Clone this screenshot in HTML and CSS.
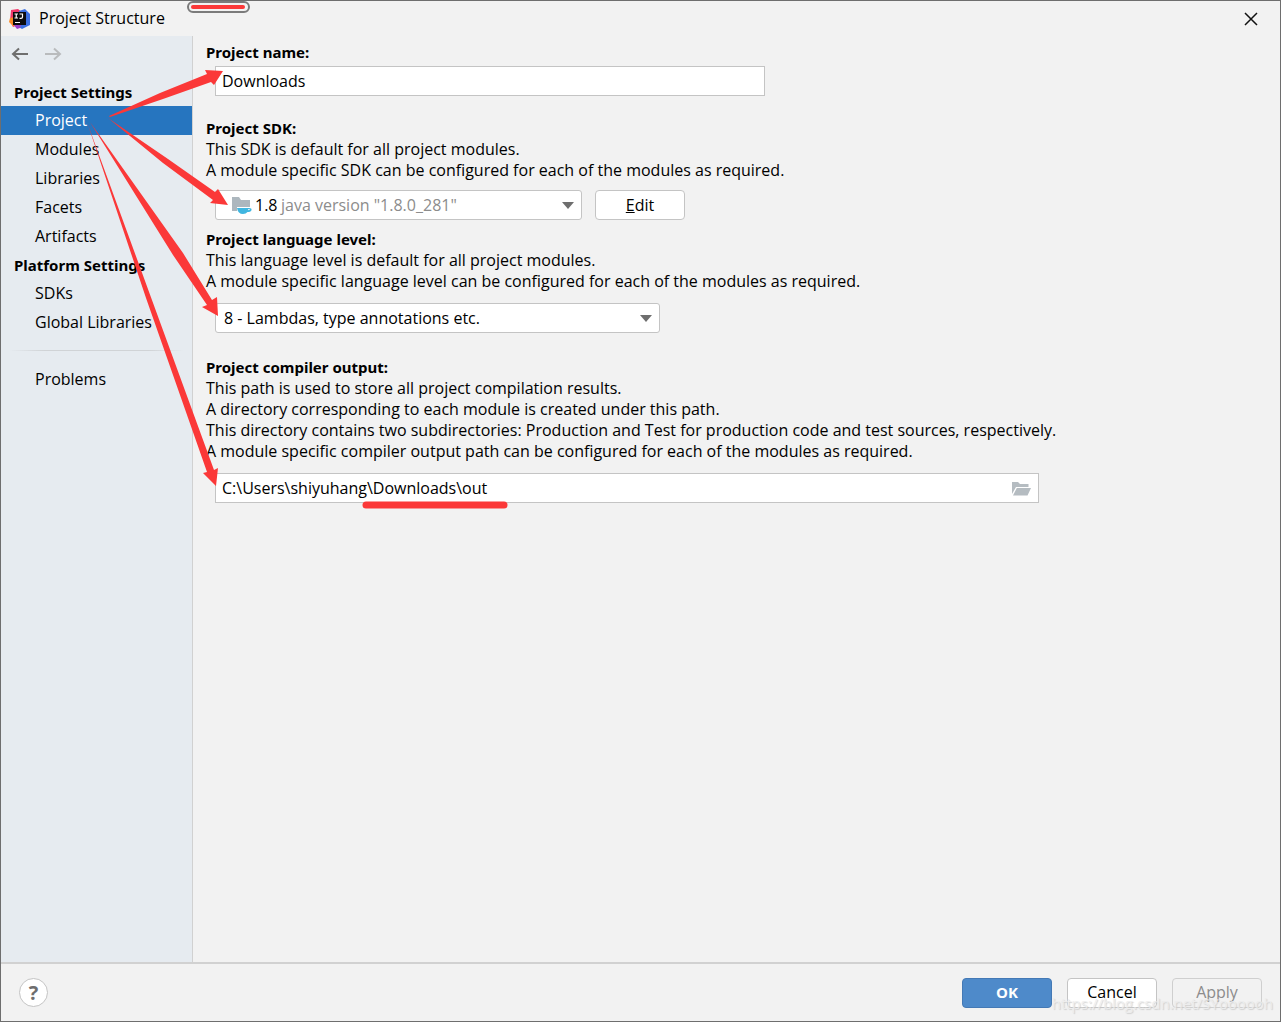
FILE: index.html
```html
<!DOCTYPE html>
<html lang="en">
<head>
<meta charset="utf-8">
<meta name="viewport" content="width=device-width, initial-scale=1">
<title>Project Structure</title>
<link rel="stylesheet" href="styles.css">
</head>
<body>
<div class="window">
  <header class="titlebar">
    <svg class="logo" width="22" height="22" viewBox="0 0 22 22" aria-hidden="true">
      <path d="M2 2 L9 1 L13 4 L9 17 L4 19 L1 13 Z" fill="#f0386b"/>
      <path d="M1 10 L6 9 L7 18 L4 18 L0 14 Z" fill="#fb8a24"/>
      <path d="M10 3 L16 1 L21 6 L21 17 L13 21 L8 18 Z" fill="#3b6fe0"/>
      <path d="M4 16 L12 17 L11 20 L8 21 Z" fill="#9b3fc9"/>
      <rect x="4" y="4" width="13" height="13" fill="#0b0b0d"/>
      <path d="M5.500 6h3.500M7.250 6v4M5.500 10h3.500M10.500 6h3v3q0 1.300-1.500 1.300h-1.500M6 14.500h5" fill="none" stroke="#fff" stroke-width="1.200"/>
    </svg>
    <h1 class="title">Project Structure</h1>
    <button class="close" type="button" aria-label="Close">
      <svg width="14" height="14" viewBox="0 0 14 14"><path d="M1 1L13 13M13 1L1 13" stroke="#111" stroke-width="1.500"/></svg>
    </button>
  </header>

  <div class="content">
    <aside class="sidebar">
      <div class="history">
        <button class="nav-button" type="button" aria-label="Back">
          <svg width="18" height="14" viewBox="0 0 18 14"><path d="M17 7H2M8 1.500L2 7L8 12.500" fill="none" stroke="#6e6e6e" stroke-width="2"/></svg>
        </button>
        <button class="nav-button" type="button" aria-label="Forward" disabled>
          <svg width="18" height="14" viewBox="0 0 18 14"><path d="M1 7H16M10 1.500L16 7L10 12.500" fill="none" stroke="#b9bbbd" stroke-width="2"/></svg>
        </button>
      </div>
      <nav class="nav">
        <h2 class="nav-heading">Project Settings</h2>
        <a class="nav-item selected" href="#project" aria-current="page">Project</a>
        <a class="nav-item" href="#modules">Modules</a>
        <a class="nav-item" href="#libraries">Libraries</a>
        <a class="nav-item" href="#facets">Facets</a>
        <a class="nav-item" href="#artifacts">Artifacts</a>
        <h2 class="nav-heading">Platform Settings</h2>
        <a class="nav-item" href="#sdks">SDKs</a>
        <a class="nav-item" href="#global-libraries">Global Libraries</a>
        <div class="separator"></div>
        <a class="nav-item" href="#problems">Problems</a>
      </nav>
    </aside>

    <main class="main">
      <section class="section">
        <label class="label" for="name">Project name:</label>
        <input class="field name-field" id="name" type="text" value="Downloads">
      </section>

      <section class="section">
        <label class="label" for="sdk">Project SDK:</label>
        <p class="hint">This SDK is default for all project modules.<br>A module specific SDK can be configured for each of the modules as required.</p>
        <div class="sdk-row">
          <div class="combo sdk-combo">
            <select class="select sdk-select" id="sdk"><option>1.8</option></select>
            <span class="sdk-detail">java version "1.8.0_281"</span>
            <svg class="sdk-icon" width="20" height="19" viewBox="0 0 20 19" aria-hidden="true">
              <path d="M0 1h7l2 3h9v7H5v4H0Z" fill="#adb7be"/>
              <path d="M5 12h12q3 0 2.500 2T15.500 16Q14 18 11 18Q6 18 5 12Z" fill="#40b6e0"/>
              <path d="M16.300 13h1.700q0 1-1.900 1.300Z" fill="#fff"/>
            </svg>
            <svg class="caret" width="12" height="7" viewBox="0 0 12 7" aria-hidden="true"><path d="M0 0H12L6 7Z" fill="#6e6e6e"/></svg>
          </div>
          <button class="button" type="button"><u>E</u>dit</button>
        </div>
      </section>

      <section class="section compact">
        <label class="label" for="level">Project language level:</label>
        <p class="hint">This language level is default for all project modules.<br>A module specific language level can be configured for each of the modules as required.</p>
        <div class="combo level-combo">
          <select class="select" id="level"><option>8 - Lambdas, type annotations etc.</option></select>
          <svg class="caret" width="12" height="7" viewBox="0 0 12 7" aria-hidden="true"><path d="M0 0H12L6 7Z" fill="#6e6e6e"/></svg>
        </div>
      </section>

      <section class="section">
        <label class="label" for="output">Project compiler output:</label>
        <p class="hint">This path is used to store all project compilation results.<br>A directory corresponding to each module is created under this path.<br>This directory contains two subdirectories: Production and Test for production code and test sources, respectively.<br>A module specific compiler output path can be configured for each of the modules as required.</p>
        <div class="combo output-combo">
          <input class="field" id="output" type="text" value="C:\Users\shiyuhang\Downloads\out">
          <button class="browse" type="button" aria-label="Browse">
            <svg width="19" height="15" viewBox="0 0 19 15"><path d="M0 1h6l2 2h8.500v3H4L0 13Z" fill="#b5bcc1"/><path d="M4.800 7H19L15.500 14.500H1Z" fill="#b5bcc1"/></svg>
          </button>
        </div>
      </section>
    </main>
  </div>

  <footer class="footer">
    <button class="help" type="button" aria-label="Help">?</button>
    <div class="actions">
      <button class="button primary" type="button">OK</button>
      <button class="button" type="button">Cancel</button>
      <button class="button" type="button" disabled>Apply</button>
    </div>
    <span class="watermark">https://blog.csdn.net/SYoooooh</span>
  </footer>

  <svg class="annotations" width="1100" height="520" viewBox="0 0 1100 520" aria-hidden="true">
    <rect x="188" y="2" width="61" height="10" rx="5" fill="#f2f2f2" stroke="#7b7b7b" stroke-width="2"/>
    <path d="M193 7H243" stroke="#fb3838" stroke-width="4" stroke-linecap="round"/>
    <g fill="#fb3838">
      <path d="M109 116L160 93L207 74L205 70L223 71L214 85L211 82L163 99L110 117Z"/>
      <path d="M108 118L168 159L215 192L218 189L228 205L210 203L213 200L163 163Z"/>
      <path d="M90 122L183 253L212 300L217 297L218 316L202 307L207 305L173 255Z"/>
      <path d="M87 122L214 470L218 468L216 486L203 473L207 472L146 298Z"/>
    </g>
    <path d="M366 505H504" stroke="#fb3838" stroke-width="7" stroke-linecap="round"/>
  </svg>
</div>
</body>
</html>
```
FILE: styles.css
```css
* {
  box-sizing: border-box;
}

body {
  margin: 0;
  color: #000;
  background: #f2f2f2;
  font: 16px/21px "Open Sans", "Noto Sans", sans-serif;
}

button,
input,
select {
  margin: 0;
  color: inherit;
  font: inherit;
}

h1,
h2,
p {
  margin: 0;
}

.window {
  position: relative;
  display: flex;
  flex-direction: column;
  min-height: 100vh;
  border: 1px solid #6e6e6e;
}

.titlebar {
  display: flex;
  align-items: center;
  gap: 8px;
  height: 35px;
  padding: 0 22px 0 8px;
}

.title {
  flex: 1;
  font-size: 16px;
  font-weight: 400;
}

.close,
.nav-button,
.browse {
  display: flex;
  padding: 0;
  border: 0;
  background: none;
}

.content {
  display: grid;
  flex: 1;
  grid-template-columns: 192px 1fr;
}

.sidebar {
  border-right: 1px solid #d1d1d1;
  background: #e6ebf0;
}

.history {
  display: flex;
  gap: 15px;
  padding: 11px 10px 17px;
}

.nav {
  display: flex;
  flex-direction: column;
}

.nav-heading,
.label {
  font-family: "Noto Sans", "Open Sans", sans-serif;
  font-size: 15px;
  font-weight: 700;
}

.nav-heading {
  padding-left: 13px;
  line-height: 28px;
}

.nav-item {
  padding-left: 34px;
  color: #000;
  line-height: 29px;
  text-decoration: none;
}

.selected {
  color: #fff;
  background: #2675bf;
}

.separator {
  height: 1px;
  margin: 13px 8px 14px;
  background: linear-gradient(90deg, transparent, #d0d3d6 20%, #d0d3d6 80%, transparent);
}

.main {
  padding: 6px 13px 20px;
}

.section {
  display: flex;
  flex-direction: column;
  align-items: flex-start;
  margin-bottom: 22px;
}

.section:has(+ .compact) {
  margin-bottom: 9px;
}

.compact {
  margin-bottom: 24px;
}

.field {
  width: 100%;
  height: 30px;
  padding: 0 6px;
  border: 1px solid #c4c4c4;
  background: #fff;
}

.name-field {
  max-width: 550px;
  margin: 3px 0 0 9px;
}

.combo {
  display: grid;
  width: 100%;
  align-items: center;
}

.combo > * {
  grid-area: 1 / 1;
}

.select {
  width: 100%;
  height: 30px;
  padding: 0 8px;
  border: 1px solid #c4c4c4;
  border-radius: 3px;
  background: #fff;
  appearance: none;
}

.caret {
  justify-self: end;
  margin-right: 8px;
  pointer-events: none;
}

.sdk-row {
  display: flex;
  gap: 13px;
  width: 100%;
  margin-top: 9px;
  padding-left: 9px;
}

.sdk-combo {
  max-width: 367px;
}

.sdk-select {
  padding-left: 39px;
}

.sdk-detail {
  padding-left: 66px;
  color: #8c8c8c;
  pointer-events: none;
}

.sdk-icon {
  margin-left: 17px;
  pointer-events: none;
}

.level-combo {
  max-width: 445px;
  margin: 11px 0 0 9px;
}

.output-combo {
  max-width: 824px;
  margin: 11px 0 0 9px;
}

.browse {
  justify-self: end;
  margin-right: 8px;
}

.button {
  width: 90px;
  height: 30px;
  padding: 0;
  border: 1px solid #c4c4c4;
  border-radius: 4px;
  background: #fff;
}

.button:disabled {
  color: #8c8c8c;
  border-color: #cfcfcf;
  background: #f2f2f2;
}

.primary {
  color: #fff;
  border-color: #4479b5;
  background: #4e8aca;
  font-size: 15px;
  font-weight: 700;
}

.footer {
  position: relative;
  display: flex;
  align-items: center;
  justify-content: space-between;
  height: 59px;
  padding: 0 18px;
  border-top: 2px solid #d1d1d1;
}

.help {
  width: 29px;
  height: 29px;
  padding: 0;
  color: #6e6e6e;
  border: 1px solid #c4c4c4;
  border-radius: 50%;
  background: #fff;
  font-size: 20px;
  font-weight: 700;
}

.actions {
  display: flex;
  gap: 15px;
}

.watermark {
  position: absolute;
  right: 7px;
  bottom: 7px;
  color: #ececec;
  font-size: 15px;
  text-shadow: 1px 1px 1px #c8c8c8;
  opacity: 0.8;
  pointer-events: none;
}

.annotations {
  position: absolute;
  top: -1px;
  left: -1px;
  pointer-events: none;
}
```
